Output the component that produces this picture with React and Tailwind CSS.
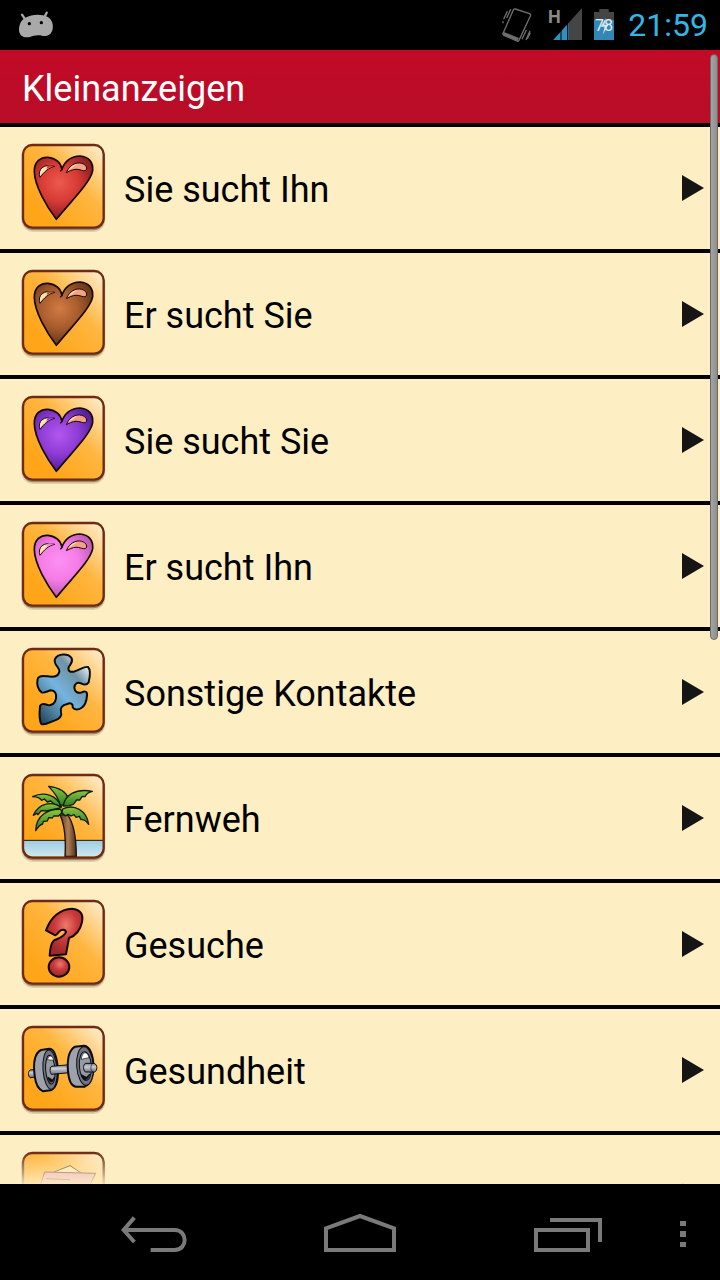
import { useState } from "react";

const HEART = "M139 268C112 232 73 168 73 124C73 94 92 81 114 82C137 84 153 98 156 118C163 94 184 78 210 78C236 80 250 96 248 122C242 156 190 206 139 268Z";

function Heart({ id, light, mid, dark }) {
  return (
    <>
      <defs>
        <radialGradient id={id} gradientUnits="userSpaceOnUse" cx="148" cy="158" r="105">
          <stop offset="0" stopColor={light} />
          <stop offset="0.55" stopColor={mid} />
          <stop offset="1" stopColor={dark} />
        </radialGradient>
      </defs>
      <path d={HEART} fill={`url(#${id})`} stroke="#170806" strokeWidth="5" strokeLinejoin="round" />
      <path d="M156 118L151 124" stroke="#170806" strokeWidth="4" />
      <path d="M90 142C82 118 100 100 134 109C116 113 104 124 90 142Z" fill="#fde3b4" stroke="#170806" strokeWidth="3" />
      <path d="M113 107C120 105 127 106 132 109C122 110 115 114 109 118Z" fill={mid} />
      <path d="M169 128C178 106 198 95 215 100C230 104 234 117 226 122C210 124 204 108 169 128Z" fill="#f4a184" stroke="#170806" strokeWidth="3" />
      <path d="M174 122C182 108 194 102 202 103C194 108 186 113 174 122Z" fill="#fde3b4" />
    </>
  );
}

function Puzzle() {
  return (
    <>
      <defs>
        <linearGradient id="puzzle" x1="0.95" y1="0.1" x2="0.15" y2="1">
          <stop offset="0" stopColor="#ffffff" />
          <stop offset="0.25" stopColor="#6f93a4" />
          <stop offset="0.55" stopColor="#74b4e0" />
          <stop offset="0.8" stopColor="#4f7f9d" />
          <stop offset="1" stopColor="#274a60" />
        </linearGradient>
      </defs>
      <path
        transform="translate(0 3)"
        d="M148 110C151 98 128 88 135 72C143 54 176 54 185 70C190 82 180 88 176 97C173 108 180 112 192 110C210 104 225 93 234 96C243 105 240 125 236 142C230 151 222 150 213 145C203 140 194 145 193 158C194 172 205 176 215 172C225 166 233 170 231 182C230 197 225 212 214 219C205 225 193 226 188 217C190 208 183 202 172 207C155 210 150 220 153 232C157 242 148 252 135 256C118 262 105 271 94 267C86 255 88 235 90 213C94 204 105 207 113 210C125 212 136 206 138 190C140 175 135 166 122 166C112 168 103 176 95 172C84 165 79 148 83 132C86 122 100 122 112 124C128 127 144 126 148 110Z"
        fill="url(#puzzle)"
        stroke="#0a0a0a"
        strokeWidth="6"
        strokeLinejoin="round"
      />
    </>
  );
}

function Palm() {
  return (
    <>
      <defs>
        <linearGradient id="trunk" x1="0" x2="1">
          <stop offset="0" stopColor="#5b3a22" />
          <stop offset="0.5" stopColor="#b08056" />
          <stop offset="1" stopColor="#4a2c18" />
        </linearGradient>
        <linearGradient id="leaf" x1="0" y1="0" x2="0" y2="1">
          <stop offset="0" stopColor="#8cc63f" />
          <stop offset="1" stopColor="#2f7d26" />
        </linearGradient>
        <linearGradient id="sea" x1="0" y1="0" x2="0" y2="1">
          <stop offset="0" stopColor="#9ccbe2" />
          <stop offset="1" stopColor="#cfe8f0" />
        </linearGradient>
      </defs>
      <path d="M41 241H279V262C279 278 268 289 252 289H68C52 289 41 278 41 262Z" fill="url(#sea)" />
      <path d="M41 241H279" stroke="#1b120c" strokeWidth="3" />
      <path d="M150 165C164 195 168 240 165 289H199C199 240 192 190 172 163Z" fill="url(#trunk)" stroke="#1b120c" strokeWidth="4" />
      <g fill="url(#leaf)" stroke="#0c210a" strokeWidth="4" strokeLinejoin="round">
        <path d="M155 140C140 108 105 92 68 110C84 111 88 113 95 121L103 117L112 126L122 123L135 135Z" />
        <path d="M150 134C146 112 132 96 116 79C142 82 166 92 175 114L168 137Z" />
        <path d="M160 138C164 106 196 84 247 94C234 97 228 103 225 110L217 109L209 120L200 120L190 133L178 137Z" />
        <path d="M154 143C128 122 86 128 70 166L80 160L84 164L94 152L110 153Z" />
        <path d="M152 148C118 146 78 164 77 212C84 200 90 194 98 192L100 184L112 183L116 173L127 174L131 168L145 168L156 158Z" />
        <path d="M158 147C192 130 230 152 236 193C228 182 220 178 213 179L208 169L198 172L192 164L183 168L174 163L166 168L156 158Z" />
      </g>
    </>
  );
}

function Question() {
  return (
    <>
      <defs>
        <radialGradient id="question" cx="0.55" cy="0.35" r="0.6">
          <stop offset="0" stopColor="#ec7b6c" />
          <stop offset="0.5" stopColor="#cb3b3c" />
          <stop offset="1" stopColor="#9c2a2c" />
        </radialGradient>
      </defs>
      <g transform="translate(0 6)" fill="url(#question)" stroke="#140605" strokeWidth="6" strokeLinejoin="round">
        <path d="M108 127C122 88 150 63 186 62C214 64 220 82 216 102C211 126 197 143 177 150L168 199L119 203C120 182 124 166 131 158C142 152 164 146 168 132C166 122 154 124 148 130C143 136 140 141 136 142Z" />
        <ellipse cx="147" cy="237" rx="31" ry="29" />
      </g>
    </>
  );
}

function Dumbbell() {
  return (
    <>
      <defs>
        <linearGradient id="steel" x1="0" y1="0" x2="0" y2="1">
          <stop offset="0" stopColor="#777b84" />
          <stop offset="0.4" stopColor="#c9cdd6" />
          <stop offset="1" stopColor="#6d717b" />
        </linearGradient>
      </defs>
      <g transform="translate(0 6)" stroke="#0d0d0f" strokeWidth="3" strokeLinejoin="round">
        <path d="M60 168L82 166V189L60 191C54 186 54 172 60 168Z" fill="url(#steel)" />
        <path d="M93 108C74 118 69 146 74 185C77 212 84 226 99 232L122 229C140 220 147 190 142 150C138 120 130 104 118 104Z" fill="#9ea2ac" strokeWidth="6" />
        <ellipse cx="120" cy="167" rx="21" ry="59" fill="#70747e" transform="rotate(-4 120 167)" />
        <ellipse cx="121" cy="167" rx="14" ry="43" fill="#9599a4" transform="rotate(-4 121 167)" />
        <path d="M112 137C116 123 127 122 131 139Z" fill="#ffffff" strokeWidth="2" />
        <path d="M114 190C117 208 129 210 133 190L128 198Z" fill="#101010" />
        <path d="M124 157L180 152V176L124 181C119 176 119 162 124 157Z" fill="url(#steel)" />
        <path d="M195 98C176 109 171 136 174 172C177 204 184 216 197 218L224 218C244 206 254 178 249 138C244 107 234 96 222 95Z" fill="#9ea2ac" strokeWidth="6" />
        <ellipse cx="225" cy="156" rx="25" ry="58" fill="#70747e" transform="rotate(-4 225 156)" />
        <ellipse cx="226" cy="156" rx="18" ry="43" fill="#9599a4" transform="rotate(-4 226 156)" />
        <path d="M214 136C216 114 231 108 237 131Z" fill="#ffffff" strokeWidth="2" />
        <path d="M214 182C219 202 234 201 239 180L229 190Z" fill="#101010" />
        <path d="M226 148L252 148C263 151 263 170 254 174L226 174C219 168 219 153 226 148Z" fill="url(#steel)" />
        <path d="M247 149C241 156 241 168 248 173" fill="none" strokeWidth="2" />
      </g>
    </>
  );
}

function Sign() {
  return (
    <g stroke="#4a3b1c" strokeWidth="3" strokeLinejoin="round">
      <path d="M132 102L180 83L212 104" fill="#ffe9b8" />
      <path d="M104 102L257 106L220 180H78Z" fill="#ee9cc6" />
      <path d="M108 122L180 125" />
    </g>
  );
}

const categories = [
  { label: "Sie sucht Ihn", icon: <Heart id="heart-red" light="#ec5a4c" mid="#d63a35" dark="#8e1f24" /> },
  { label: "Er sucht Sie", icon: <Heart id="heart-brown" light="#d27a44" mid="#a85c2c" dark="#6a3a1c" /> },
  { label: "Sie sucht Sie", icon: <Heart id="heart-purple" light="#b257ee" mid="#8f3bd6" dark="#54219a" /> },
  { label: "Er sucht Ihn", icon: <Heart id="heart-pink" light="#fc90f2" mid="#f57ce6" dark="#c05cb8" /> },
  { label: "Sonstige Kontakte", icon: <Puzzle /> },
  { label: "Fernweh", icon: <Palm /> },
  { label: "Gesuche", icon: <Question /> },
  { label: "Gesundheit", icon: <Dumbbell /> },
  { label: "", icon: <Sign /> },
];

// part of the whole list that the scroll thumb covers
const THUMB = 0.517;

function Tile({ children }) {
  return (
    <svg className="h-[92px] w-[86px] shrink-0" viewBox="30 36 258 276" aria-hidden="true">
      <defs>
        <linearGradient id="tile" x1="0.2" y1="0.8" x2="1" y2="0">
          <stop offset="0" stopColor="#ffa51a" />
          <stop offset="0.5" stopColor="#ffb640" />
          <stop offset="1" stopColor="#fff0d4" />
        </linearGradient>
      </defs>
      <rect x="34" y="46" width="252" height="260" rx="36" fill="#000000" opacity="0.12" />
      <rect x="36" y="45" width="248" height="256" rx="34" fill="#3a1a08" opacity="0.4" />
      <rect x="39" y="45" width="242" height="248" rx="28" fill="url(#tile)" />
      {children}
      <rect x="39" y="45" width="242" height="248" rx="28" fill="none" stroke="#6e2a14" strokeWidth="7" />
    </svg>
  );
}

function StatusBar() {
  return (
    <div className="flex h-[50px] shrink-0 items-center justify-between bg-black pr-3 pl-4">
      <svg className="h-8 w-10" viewBox="48 27 120 96" aria-hidden="true">
        <path d="M66 44L74 56M140 38L134 50" stroke="#a9a9a9" strokeWidth="7" strokeLinecap="round" />
        <path d="M76 53C95 42 125 41 142 50C156 58 160 72 158 86C155 104 142 110 126 107C112 104 100 107 90 111C72 115 58 108 57 90C57 72 64 60 76 53Z" fill="#a9a9a9" />
        <circle cx="88" cy="71" r="5" fill="#000000" />
        <circle cx="124" cy="68" r="5" fill="#000000" />
      </svg>
      <div className="flex items-center gap-3">
        <svg className="h-[50px] w-[34px]" viewBox="30 0 102 150" fill="none" stroke="#6f6f6f" aria-hidden="true">
          <path d="M76 27L119 41Q123 43 121 48L87 121Q84 125 80 123L42 106Q37 103 40 98L70 30Q72 26 76 27Z" strokeWidth="4" />
          <path d="M40 96L86 114L82 123L39 104Z" fill="#6f6f6f" />
          <path d="M62 28L50 54M52 34L41 58M40 64L38 70M109 90L96 118M120 92L108 120M121 98L112 116" strokeWidth="4" />
        </svg>
        <svg className="h-[50px] w-9" viewBox="168 0 108 150" aria-hidden="true">
          <path d="M276 24V120H190Z" fill="#454545" />
          <path d="M236 69V120H190Z" fill="#2f8fc0" />
          <path d="M213 92V120M233 70V120" stroke="#000000" strokeWidth="3" />
          <text x="174" y="70" fill="#8a8a8a" fontFamily="Roboto, sans-serif" fontWeight="700" fontSize="54">H</text>
        </svg>
        <svg className="h-[50px] w-[22px]" viewBox="312 0 66 150" aria-hidden="true">
          <path d="M328 27H356V36H372V62H312V36H328Z" fill="#454545" />
          <rect x="312" y="60" width="60" height="60" fill="#3387b5" />
          <text x="342" y="94" textAnchor="middle" fill="#e4eef2" fontFamily="Roboto, sans-serif" fontSize="48">78</text>
          <path d="M348 54L332 80H344L338 104L355 74H343Z" fill="#d8e6ec" />
        </svg>
        <time className="text-[32px] leading-10 text-[#33b5e5]">21:59</time>
      </div>
    </div>
  );
}

function NavBar() {
  return (
    <nav className="flex h-24 shrink-0 items-center bg-black pl-[50px] text-[#7a7a7a]">
      <button aria-label="Back" className="flex h-full flex-1 items-center justify-center">
        <svg className="h-[60px] w-20" viewBox="39 36 240 180" fill="none" stroke="currentColor" strokeWidth="12">
          <path d="M103 83L71 120L103 156" />
          <path d="M72 120H224C264 120 264 180 224 180H152" />
        </svg>
      </button>
      <button aria-label="Home" className="flex h-full flex-1 items-center justify-center">
        <svg className="h-[60px] w-20" viewBox="660 36 240 180" fill="none" stroke="currentColor" strokeWidth="12">
          <path d="M678 180V115L780 78L882 115V180Z" />
        </svg>
      </button>
      <button aria-label="Recent apps" className="flex h-full flex-1 items-center justify-center">
        <svg className="h-[60px] w-20" viewBox="81 36 240 180" fill="none" stroke="currentColor" strokeWidth="12">
          <path d="M108 120H264V180H108Z" />
          <path d="M150 90H300V156" />
        </svg>
      </button>
      <button aria-label="Menu" className="flex h-full w-[50px] items-center">
        <svg className="h-[60px] w-6" viewBox="510 36 72 180" fill="currentColor">
          <path d="M540 93H558V108H540ZM540 123H558V141H540ZM540 156H558V171H540Z" />
        </svg>
      </button>
    </nav>
  );
}

function App() {
  const [selected, setSelected] = useState(null);

  return (
    <div className="flex h-screen flex-col overflow-hidden bg-black font-['Roboto',sans-serif]">
      <StatusBar />

      <main className="relative min-h-0 flex-1 overflow-hidden bg-[#feeec3]">
        <h1 className="border-b-4 border-black bg-linear-to-b from-[#c10a26] to-[#b80d28] px-[22px] pt-[19px] pb-[14px] text-4xl leading-10 font-normal text-white">Kleinanzeigen</h1>
        <ul>
          {categories.map((cat, i) => (
            <li key={i}>
              <a
                href="#"
                aria-current={selected === i ? "true" : undefined}
                className="flex h-[126px] items-center border-b-4 border-black pr-4 pl-5 text-black"
                onClick={(e) => {
                  e.preventDefault();
                  setSelected(i);
                }}
              >
                <Tile>{cat.icon}</Tile>
                <span className="ml-[18px] flex-1 pt-1 text-4xl leading-10">{cat.label}</span>
                <svg className="h-[26px] w-[22px]" viewBox="0 0 22 26" aria-hidden="true">
                  <path d="M0 0L22 13L0 26Z" fill="#151515" />
                </svg>
              </a>
            </li>
          ))}
        </ul>
        <div className="pointer-events-none absolute inset-x-0 bottom-0 h-8 bg-linear-to-b from-[#feeec3]/0 to-[#feeec3]/90" />
        <div className="absolute top-1 right-0.5 w-2 rounded-full border border-[#6a6a6a] bg-linear-to-r from-[#a5a5a5] to-[#8e8e8e]" style={{ height: `${THUMB * 100}%` }} />
      </main>

      <NavBar />
    </div>
  );
}

export default App;
